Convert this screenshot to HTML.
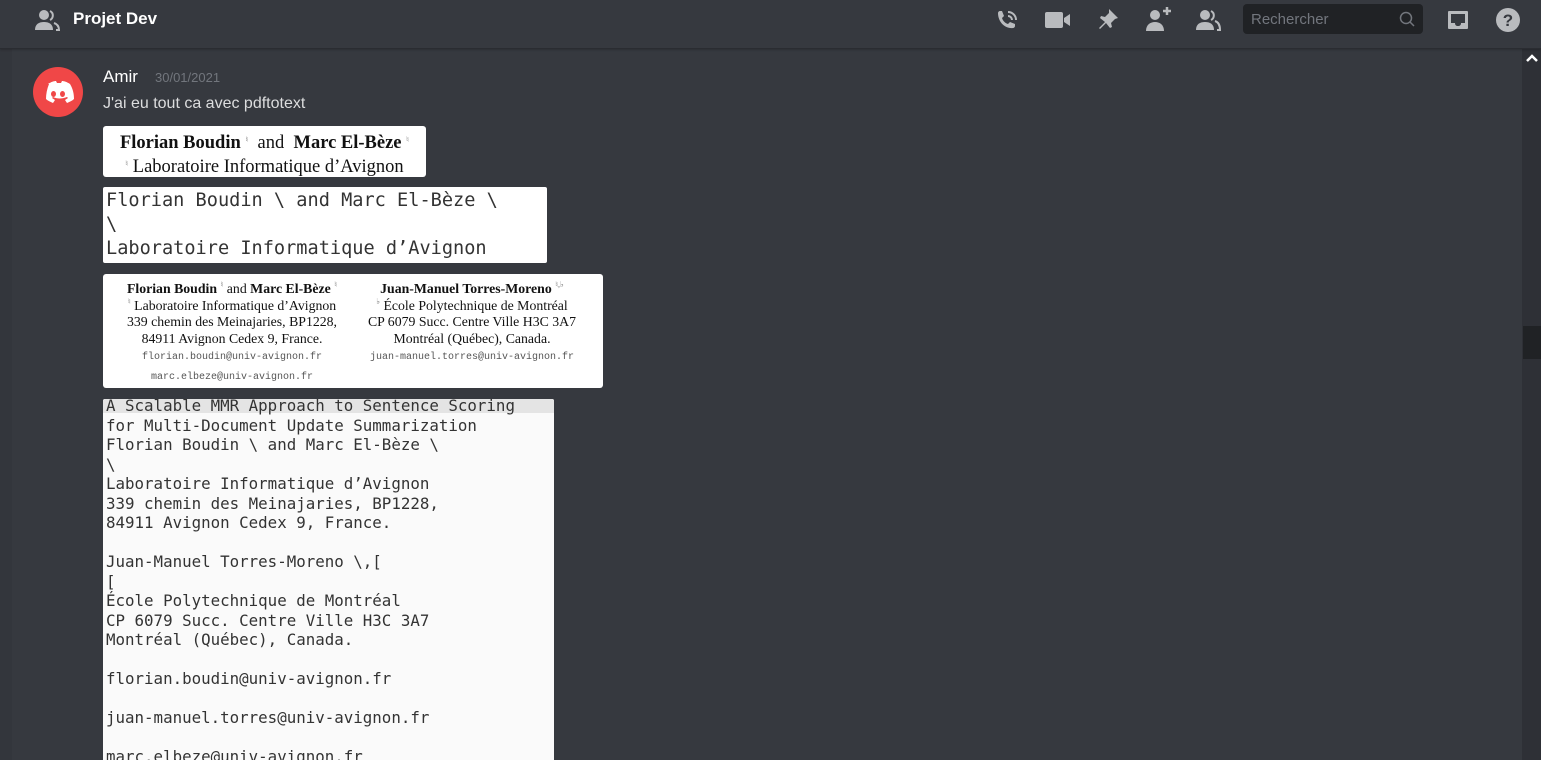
<!DOCTYPE html>
<html><head><meta charset="utf-8"><style>
*{margin:0;padding:0;box-sizing:border-box}
html,body{width:1541px;height:760px;overflow:hidden}
body{background:#36393f;font-family:"Liberation Sans",sans-serif;position:relative}
.hdr{position:absolute;left:0;top:0;width:1541px;height:49px;background:#36393f;border-bottom:1px solid #2a2c31;box-shadow:0 1px 2px rgba(0,0,0,.2);z-index:1}
.strip{position:absolute;left:0;top:49px;width:12px;height:711px;background:#33363c}
.title{position:absolute;left:73px;top:9px;color:#fff;font-weight:bold;font-size:17px;z-index:2}
.ic{position:absolute;fill:#b9bbbe;z-index:2}
.search{position:absolute;left:1243px;top:4px;width:180px;height:30px;background:#202225;border-radius:4px;color:#72767d;font-size:15px;padding:7px 8px;z-index:2}
.scroll{position:absolute;left:1522px;top:49px;width:19px;height:711px;background:#2e3036}
.thumb{position:absolute;left:1523px;top:326px;width:18px;height:33px;background:#202225}
.av{position:absolute;left:33px;top:67px;width:50px;height:50px;border-radius:50%;background:#f04747}
.name{position:absolute;left:103px;top:67px;color:#fff;font-size:17px}
.date{position:absolute;left:155px;top:70px;color:#72767d;font-size:13px}
.msg{position:absolute;left:103px;top:95px;color:#dcddde;font-size:16px}
.box{position:absolute;background:#fff;border-radius:3px;color:#111;overflow:hidden}
.serif{font-family:"Liberation Serif",serif;text-align:center}
.mono{font-family:"DejaVu Sans Mono",monospace;white-space:pre;color:#333}
sup{font-size:8px;color:#777;line-height:0;vertical-align:6px}
</style></head><body>
<div class="hdr"></div>
<div class="strip"></div>
<svg class="ic" style="left:33px;top:8px" width="30" height="24" viewBox="0 0 30 24"><circle cx="11" cy="7" r="5"/><path d="M2 22c0-6 4-8 9-8s9 2 9 8z"/><path d="M17 3a5 5 0 0 1 0 9M21 15c3 1 5 3 5 7h-3" fill="none" stroke="#b9bbbe" stroke-width="2"/></svg>
<div class="title">Projet Dev</div>
<svg class="ic" style="left:994px;top:8px" width="26" height="26" viewBox="0 0 26 26"><path d="M4 5c0-1 1-2 2-2h2l2 5-2 2c1 3 3 5 6 6l2-2 5 2v2c0 1-1 2-2 2C11 21 4 14 4 5z"/><path d="M14 4a8 8 0 0 1 8 8M14 8a4 4 0 0 1 4 4" fill="none" stroke="#b9bbbe" stroke-width="2"/></svg>
<svg class="ic" style="left:1044px;top:9px" width="28" height="22" viewBox="0 0 28 22"><rect x="1" y="3" width="18" height="16" rx="2"/><path d="M20 9l6-4v12l-6-4z"/></svg>
<svg class="ic" style="left:1096px;top:7px" width="24" height="24" viewBox="0 0 24 24"><path d="M13 2l9 9-3 1-4 4 1 4-2 1-4-5-6 6-1-1 6-6-5-4 1-2 4 1 4-4z"/></svg>
<svg class="ic" style="left:1143px;top:5px" width="30" height="26" viewBox="0 0 30 26"><circle cx="12" cy="10" r="5"/><path d="M3 26c0-6 4-9 9-9s9 3 9 9z"/><path d="M24 2v8M20 6h8" stroke="#b9bbbe" stroke-width="2.5"/></svg>
<svg class="ic" style="left:1194px;top:8px" width="30" height="24" viewBox="0 0 30 24"><circle cx="11" cy="7" r="5"/><path d="M2 22c0-6 4-8 9-8s9 2 9 8z"/><path d="M17 3a5 5 0 0 1 0 9M21 13c3 1 5 4 5 9h-3" fill="none" stroke="#b9bbbe" stroke-width="2"/></svg>
<div class="search">Rechercher<svg style="position:absolute;right:8px;top:7px" width="16" height="16" viewBox="0 0 16 16"><circle cx="7" cy="7" r="5.5" fill="none" stroke="#72767d" stroke-width="1.5"/><path d="M11 11l4 4" stroke="#72767d" stroke-width="1.5"/></svg></div>
<svg class="ic" style="left:1446px;top:8px" width="24" height="24" viewBox="0 0 24 24"><path d="M3 3h18a1 1 0 0 1 1 1v16a1 1 0 0 1-1 1H3a1 1 0 0 1-1-1V4a1 1 0 0 1 1-1zm2 3v9h4c0 2 1 3 3 3s3-1 3-3h4V6z" fill-rule="evenodd"/></svg>
<svg class="ic" style="left:1495px;top:7px" width="26" height="26" viewBox="0 0 26 26"><circle cx="13" cy="13" r="12"/><text x="13" y="19" text-anchor="middle" font-family="Liberation Sans" font-weight="bold" font-size="17" fill="#36393f">?</text></svg>
<div class="scroll"></div><div class="thumb"></div>
<svg style="position:absolute;left:1526px;top:54px" width="12" height="10" viewBox="0 0 12 10"><path d="M1 7l5-5 5 5" fill="none" stroke="#fff" stroke-width="2.5"/></svg>
<div class="av"><svg width="50" height="50" viewBox="0 0 50 50"><path d="M15 17c3-2 6-3 8-3l1 2c1 0 3 0 4 0l1-2c2 0 5 1 8 3 3 5 4 10 4 15-2 2-5 3-7 4l-2-3 3-2-1-1c-5 2-10 2-14 0l-1 1 3 2-2 3c-2-1-5-2-7-4 0-5 1-10 3-15z" fill="#fff"/><ellipse cx="20.5" cy="27" rx="2.5" ry="3" fill="#f04747"/><ellipse cx="29.5" cy="27" rx="2.5" ry="3" fill="#f04747"/></svg></div>
<div class="name">Amir</div><div class="date">30/01/2021</div>
<div class="msg">J'ai eu tout ca avec pdftotext</div>
<div class="box serif" style="left:103px;top:126px;width:323px;height:51px;font-size:18.5px;line-height:24px;padding-top:5px;white-space:nowrap"><b>Florian Boudin</b> <sup>♮</sup> &nbsp;and &nbsp;<b>Marc El-Bèze</b> <sup>♮</sup><br><sup>♮</sup> Laboratoire Informatique d’Avignon</div>
<div class="box mono" style="left:103px;top:187px;width:444px;height:76px;font-size:18.6px;line-height:24px;padding:2px 0 0 3px;border-radius:2px">Florian Boudin \ and Marc El-Bèze \
\
Laboratoire Informatique d’Avignon</div>
<div class="box serif" style="left:103px;top:274px;width:500px;height:114px;font-size:13.8px;line-height:16.5px">
<div style="position:absolute;left:4px;top:7px;width:250px;white-space:nowrap"><b>Florian Boudin</b> <sup>♮</sup> and <b>Marc El-Bèze</b> <sup>♮</sup><br><sup>♮</sup> Laboratoire Informatique d’Avignon<br>339 chemin des Meinajaries, BP1228,<br>84911 Avignon Cedex 9, France.<br><span style="font-family:'Liberation Mono',monospace;font-size:10px;color:#555">florian.boudin@univ-avignon.fr<br>marc.elbeze@univ-avignon.fr</span></div>
<div style="position:absolute;left:244px;top:7px;width:250px;white-space:nowrap"><b>Juan-Manuel Torres-Moreno</b> <sup>♮,♭</sup><br><sup>♭</sup> École Polytechnique de Montréal<br>CP 6079 Succ. Centre Ville H3C 3A7<br>Montréal (Québec), Canada.<br><span style="font-family:'Liberation Mono',monospace;font-size:10px;color:#555">juan-manuel.torres@univ-avignon.fr</span></div>
</div>
<div class="box mono" style="left:103px;top:399px;width:451px;height:361px;background:#fafafa;font-size:15.8px;line-height:19.5px;padding:0 0 0 3px;border-radius:2px 2px 0 0"><div style="position:absolute;left:0;top:0;width:451px;height:14px;background:#e4e4e4"></div><div style="position:relative;top:-3px">A Scalable MMR Approach to Sentence Scoring
for Multi-Document Update Summarization
Florian Boudin \ and Marc El-Bèze \
\
Laboratoire Informatique d’Avignon
339 chemin des Meinajaries, BP1228,
84911 Avignon Cedex 9, France.

Juan-Manuel Torres-Moreno \,[
[
École Polytechnique de Montréal
CP 6079 Succ. Centre Ville H3C 3A7
Montréal (Québec), Canada.

florian.boudin@univ-avignon.fr

juan-manuel.torres@univ-avignon.fr

marc.elbeze@univ-avignon.fr</div></div>
</body></html>
